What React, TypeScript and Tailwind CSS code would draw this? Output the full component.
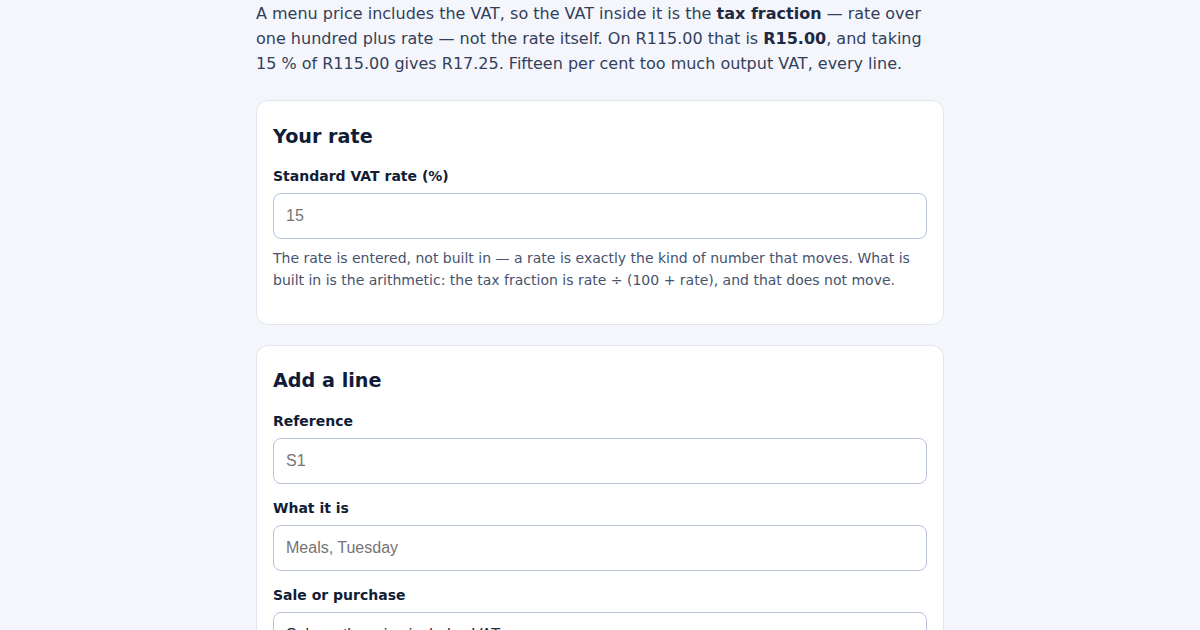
import React from 'react';

const Field: React.FC<{ label: string; placeholder?: string; children?: React.ReactNode }> = ({
  label,
  placeholder,
  children,
}) => (
  <div className="flex flex-col">
    <label className="mb-[7px] text-sm leading-5 font-bold text-[#111c36]">{label}</label>
    {children ?? (
      <input
        type="text"
        placeholder={placeholder}
        className="h-[46px] w-full rounded-lg border border-[#b9c3d9] bg-white px-3 font-['Liberation_Sans',Arial,sans-serif] text-base text-[#1e293b] placeholder:text-[#757575] outline-none"
      />
    )}
  </div>
);

export default function App() {
  return (
    <div className="min-h-screen bg-[#f4f6fb] font-['DejaVu_Sans',sans-serif]">
      <div className="mx-auto w-[688px] pt-px">
        <p className="mb-6 text-base leading-[25px] text-[#323f5c]">
          A menu price includes the VAT, so the VAT inside it is the{' '}
          <strong className="font-bold text-[#1e2942]">tax fraction</strong> — rate over one hundred plus rate —
          not the rate itself. On R115.00 that is <strong className="font-bold text-[#1e2942]">R15.00</strong>, and
          taking 15 % of R115.00 gives R17.25. Fifteen per cent too much output VAT, every line.
        </p>

        {/* Rate */}
        <section className="mb-5 rounded-xl border border-[#e1e5f0] bg-white px-4 pt-[22px] pb-[33px]">
          <h2 className="mb-[15px] text-[19.2px] leading-7 font-bold text-[#111c36]">Your rate</h2>
          <Field label="Standard VAT rate (%)" placeholder="15" />
          <p className="mt-2 text-sm leading-[22px] text-[#46536e]">
            The rate is entered, not built in — a rate is exactly the kind of number that moves. What is built in is
            the arithmetic: the tax fraction is rate ÷ (100 + rate), and that does not move.
          </p>
        </section>

        {/* New line */}
        <section className="rounded-xl border border-[#e1e5f0] bg-white px-4 pt-[21px] pb-5">
          <h2 className="mb-4 text-[19.2px] leading-7 font-bold text-[#111c36]">Add a line</h2>
          <div className="flex flex-col gap-[14px]">
            <Field label="Reference" placeholder="S1" />
            <Field label="What it is" placeholder="Meals, Tuesday" />
            <Field label="Sale or purchase">
              <select className="h-[46px] w-full appearance-none rounded-lg border border-[#b9c3d9] bg-white px-3 font-['Liberation_Sans',Arial,sans-serif] text-base text-[#1e293b] outline-none">
                <option>Sale — the price includes VAT</option>
                <option>Purchase — the price includes VAT</option>
              </select>
            </Field>
            <Field label="Price including VAT" placeholder="115.00" />
          </div>
        </section>
      </div>
    </div>
  );
}
